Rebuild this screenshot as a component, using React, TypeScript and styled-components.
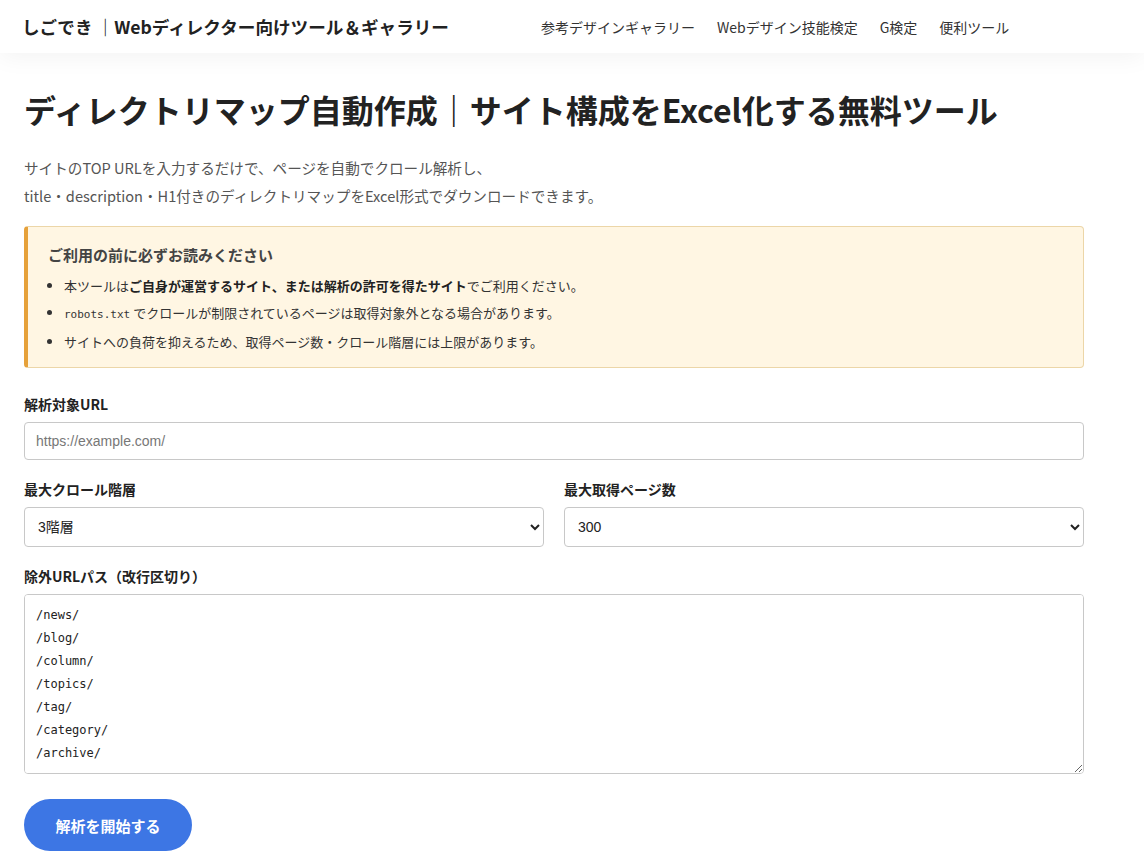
import styled, { createGlobalStyle } from "styled-components";

const GlobalStyle = createGlobalStyle`
  body {
    margin: 0;
    background: #ffffff;
    color: #222;
    font-family: "Noto Sans CJK JP", "Noto Sans", sans-serif;
  }
`;

const navItems = ["参考デザインギャラリー", "Webデザイン技能検定", "G検定", "便利ツール"];

const excludePaths = [
  "/news/",
  "/blog/",
  "/column/",
  "/topics/",
  "/tag/",
  "/category/",
  "/archive/",
].join("\n");

export default function App() {
  return (
    <>
      <GlobalStyle />
      <Header>
        <Logo>しごでき ｜Webディレクター向けツール＆ギャラリー</Logo>
        <Nav>
          {navItems.map((item) => (
            <NavLink key={item}>{item}</NavLink>
          ))}
        </Nav>
      </Header>
      <Main>
        <Title>ディレクトリマップ自動作成｜サイト構成をExcel化する無料ツール</Title>
        <Lead>
          サイトのTOP URLを入力するだけで、ページを自動でクロール解析し、
          <br />
          title・description・H1付きのディレクトリマップをExcel形式でダウンロードできます。
        </Lead>

        <Notice>
          <NoticeTitle>ご利用の前に必ずお読みください</NoticeTitle>
          <NoticeList>
            <li>
              本ツールは<strong>ご自身が運営するサイト、または解析の許可を得たサイト</strong>でご利用ください。
            </li>
            <li>
              <Code>robots.txt</Code> でクロールが制限されているページは取得対象外となる場合があります。
            </li>
            <li>サイトへの負荷を抑えるため、取得ページ数・クロール階層には上限があります。</li>
          </NoticeList>
        </Notice>

        <Field>
          <Label>解析対象URL</Label>
          <TextInput type="text" placeholder="https://example.com/" />
        </Field>

        <Row>
          <Field>
            <Label>最大クロール階層</Label>
            <Select defaultValue="3">
              <option value="1">1階層</option>
              <option value="2">2階層</option>
              <option value="3">3階層</option>
              <option value="4">4階層</option>
            </Select>
          </Field>
          <Field>
            <Label>最大取得ページ数</Label>
            <Select defaultValue="300">
              <option value="100">100</option>
              <option value="300">300</option>
              <option value="500">500</option>
            </Select>
          </Field>
        </Row>

        <Field>
          <Label>除外URLパス（改行区切り）</Label>
          <TextArea defaultValue={excludePaths} />
        </Field>

        <SubmitButton type="button">解析を開始する</SubmitButton>
      </Main>
    </>
  );
}

const Header = styled.header`
  display: flex;
  align-items: center;
  height: 53px;
  padding: 0 22px;
  background: #ffffff;
  box-shadow: 0 4px 24px rgba(0, 0, 0, 0.05);
  position: relative;
`;

const Logo = styled.div`
  width: 496px;
  font-size: 17.6px;
  font-weight: 700;
  color: #222;
  white-space: nowrap;
`;

const Nav = styled.nav`
  display: flex;
  gap: 22px;
  margin-left: 23px;
`;

const NavLink = styled.a`
  font-size: 14px;
  color: #333;
  cursor: pointer;
`;

const Main = styled.main`
  width: 1060px;
  padding: 24px 0 40px 24px;
`;

const Title = styled.h1`
  margin: 8px 0 0;
  font-size: 32px;
  line-height: 48px;
  font-weight: 700;
  color: #222;
  white-space: nowrap;
`;

const Lead = styled.p`
  margin: 21px 0 16px;
  font-size: 14.6px;
  line-height: 28px;
  color: #555;
`;

const Notice = styled.div`
  box-sizing: border-box;
  padding: 16px 20px 12px 20px;
  background: #fff6e3;
  border: 1px solid #ecd6a8;
  border-left: 4px solid #e6a13a;
  border-radius: 4px;
  margin-bottom: 26px;
`;

const NoticeTitle = styled.div`
  font-size: 15px;
  font-weight: 700;
  color: #444;
  line-height: 24px;
  margin-bottom: 5px;
`;

const NoticeList = styled.ul`
  margin: 0;
  padding-left: 16px;
  font-size: 13px;
  color: #333;

  li {
    line-height: 27px;
  }

  strong {
    font-weight: 700;
    color: #222;
  }
`;

const Code = styled.code`
  font-family: "DejaVu Sans Mono", "Liberation Mono", monospace;
  font-size: 11px;
`;

const Field = styled.div`
  display: flex;
  flex-direction: column;
  flex: 1;
  margin-bottom: 19px;
`;

const Row = styled.div`
  display: flex;
  gap: 20px;
`;

const Label = styled.label`
  font-size: 14px;
  font-weight: 700;
  color: #222;
  line-height: 20px;
  margin-bottom: 8px;
`;

const controlBase = `
  box-sizing: border-box;
  width: 100%;
  border: 1px solid #c8c8c8;
  border-radius: 4px;
  background: #ffffff;
  font-size: 14px;
  color: #222;
  outline: none;
`;

const TextInput = styled.input`
  ${controlBase}
  height: 38px;
  padding: 0 11px;
  font-family: "Liberation Sans", Arial, sans-serif;

  &::placeholder {
    color: #777;
  }
`;

const Select = styled.select`
  ${controlBase}
  height: 40px;
  padding: 0 10px 0 9px;
  font-family: "Liberation Sans", "Noto Sans CJK JP", sans-serif;
`;

const TextArea = styled.textarea`
  ${controlBase}
  height: 180px;
  padding: 9px 11px;
  resize: vertical;
  font-family: "DejaVu Sans Mono", "Liberation Mono", monospace;
  font-size: 12px;
  line-height: 23px;
`;

const SubmitButton = styled.button`
  width: 168px;
  height: 52px;
  margin-top: 6px;
  border: none;
  border-radius: 26px;
  background: #3d76e4;
  color: #ffffff;
  font-family: "Noto Sans CJK JP", sans-serif;
  font-size: 15px;
  font-weight: 700;
  cursor: pointer;
`;
